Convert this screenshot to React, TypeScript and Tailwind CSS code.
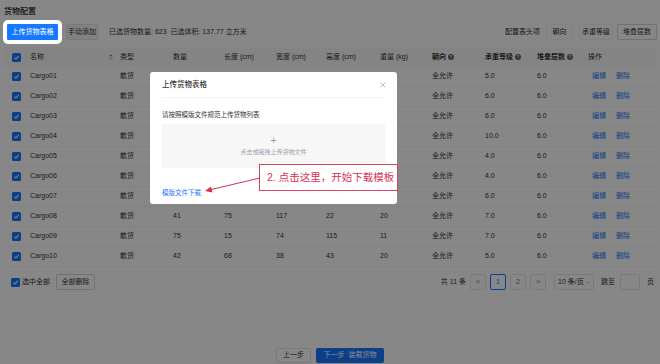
import React from "react";

const ROWS = [
  { name: "Cargo01", bear: "5.0" },
  { name: "Cargo02", bear: "6.0" },
  { name: "Cargo03", bear: "6.0" },
  { name: "Cargo04", bear: "10.0" },
  { name: "Cargo05", bear: "4.0" },
  { name: "Cargo06", bear: "4.0" },
  { name: "Cargo07", bear: "6.0" },
  { name: "Cargo08", qty: 41, l: 75, w: 117, h: 22, kg: 20, bear: "7.0" },
  { name: "Cargo09", qty: 75, l: 15, w: 74, h: 115, kg: 11, bear: "7.0" },
  { name: "Cargo10", qty: 42, l: 68, w: 38, h: 43, kg: 20, bear: "5.0" },
];

const GRID = "grid grid-cols-[22px_90px_53px_51px_52px_50px_54px_52px_53px_52px_51px_72px]";

function Check() {
  return (
    <span className="flex h-[9px] w-[9px] items-center justify-center rounded-[1.5px] bg-[#1677ff]">
      <svg viewBox="0 0 10 10" className="h-[7px] w-[7px]">
        <path d="M2 5.2 4.2 7.3 8.2 2.8" fill="none" stroke="white" strokeWidth="1.5" />
      </svg>
    </span>
  );
}

function Info() {
  return (
    <span className="ml-[2px] inline-flex h-[6px] w-[6px] items-center justify-center rounded-full bg-[#666] text-[4px] leading-none text-white">
      ?
    </span>
  );
}

function PageBox({ children, active }: { children: React.ReactNode; active?: boolean }) {
  return (
    <span
      className={`flex h-[16px] w-[16px] items-center justify-center rounded-[2px] border text-[7px] ${
        active ? "border-[#1677ff] text-[#1677ff]" : "border-gray-200 text-gray-500"
      }`}
    >
      {children}
    </span>
  );
}

export default function App() {
  return (
    <div className="relative h-[364px] w-[660px] overflow-hidden bg-white font-['Liberation_Sans','Noto_Sans_CJK_SC',sans-serif] text-[#333]">
      <div className="flex h-full flex-col px-1 pt-[7px]">
        {/* Title */}
        <div className="text-[8px] leading-[10px] font-medium text-[#222]">货物配置</div>

        {/* Toolbar */}
        <div className="mt-[7px] flex h-[16px] items-center text-[7px]">
          <span className="relative z-20 ml-[3px] flex h-[16px] w-[51px] items-center justify-center rounded-[1px] bg-[#1677ff] text-white outline-[4px] outline-white">
            上传货物表格
          </span>
          <span className="ml-[8px] flex h-[16px] w-[32px] items-center justify-center rounded-[2px] border border-gray-200 bg-gray-100">
            手动添加
          </span>
          <span className="ml-[11px]">已选货物数量: 623&nbsp;&nbsp;已选体积: 137.77 立方米</span>
          <span className="ml-auto">配置表头项</span>
          <span className="ml-[6px] flex h-[16px] w-[27px] items-center justify-center rounded-[2px] border border-gray-100">朝向</span>
          <span className="ml-[6px] flex h-[16px] w-[34px] items-center justify-center rounded-[2px] border border-gray-100">承重等级</span>
          <span className="ml-[4px] mr-[-1px] flex h-[16px] w-[40px] items-center justify-center rounded-[2px] border border-gray-300">堆叠层数</span>
        </div>

        {/* Table */}
        <div className="mt-[7px] text-[7px]">
          <div className={`${GRID} h-[20px] items-center bg-[#fafafa] text-[#333]`}>
            <span className="flex justify-end pr-[5px]"><Check /></span>
            <span className="flex items-center pl-1">
              名称
              <svg viewBox="0 0 6 8" className="ml-auto mr-[3px] h-[6px] w-[4px]">
                <path d="M3 0 6 3H0z" fill="#888" />
                <path d="M3 8 0 5H6z" fill="#bbb" />
              </svg>
            </span>
            <span className="pl-1">类型</span>
            <span className="pl-1">数量</span>
            <span className="pl-1">长度 (cm)</span>
            <span className="pl-1">宽度 (cm)</span>
            <span className="pl-1">高度 (cm)</span>
            <span className="pl-1">重量 (kg)</span>
            <span className="flex items-center pl-1 font-bold">朝向<Info /></span>
            <span className="flex items-center pl-1 font-bold">承重等级<Info /></span>
            <span className="flex items-center pl-1 font-bold">堆叠层数<Info /></span>
            <span className="pl-1">操作</span>
          </div>
          {ROWS.map((r) => (
            <div key={r.name} className={`${GRID} h-[20px] items-center border-b border-gray-100`}>
              <span className="flex justify-end pr-[5px]"><Check /></span>
              <span className="pl-1">{r.name}</span>
              <span className="pl-1">散货</span>
              <span className="pl-1">{r.qty}</span>
              <span className="pl-1">{r.l}</span>
              <span className="pl-1">{r.w}</span>
              <span className="pl-1">{r.h}</span>
              <span className="pl-1">{r.kg}</span>
              <span className="pl-1">全允许</span>
              <span className="pl-1">{r.bear}</span>
              <span className="pl-1">6.0</span>
              <span className="flex gap-[10px] pl-2 text-[#1677ff]">
                <span>编辑</span>
                <span>删除</span>
              </span>
            </div>
          ))}
        </div>

        {/* Bottom bar */}
        <div className="mt-[7px] flex h-[16px] items-center text-[7px]">
          <span className="ml-[7px]"><Check /></span>
          <span className="ml-[2px]">选中全部</span>
          <span className="ml-[6px] flex h-[16px] w-[39px] items-center justify-center rounded-[2px] border border-gray-300">全部删除</span>
          <span className="ml-auto">共 11 条</span>
          <span className="ml-[4px] flex items-center gap-[4px]">
            <PageBox>&lt;</PageBox>
            <PageBox active>1</PageBox>
            <PageBox>2</PageBox>
            <PageBox>&gt;</PageBox>
          </span>
          <span className="ml-[8px] flex h-[16px] w-[40px] items-center whitespace-nowrap rounded-[2px] border border-gray-200 pl-[3px]">
            10 条/页
            <svg viewBox="0 0 8 5" className="ml-auto mr-[3px] h-[3px] w-[5px] shrink-0">
              <path d="M1 1 4 4 7 1" fill="none" stroke="#aaa" strokeWidth="1.2" />
            </svg>
          </span>
          <span className="ml-[7px]">跳至</span>
          <span className="ml-[5px] h-[16px] w-[20px] rounded-[2px] border border-gray-200" />
          <span className="ml-[7px] mr-[2px]">页</span>
        </div>

        {/* Footer buttons */}
        <div className="mt-auto mb-[1px] flex justify-center gap-[5px] text-[7px]">
          <span className="flex h-[15px] w-[35px] items-center justify-center rounded-[2px] border border-gray-200 bg-white">上一步</span>
          <span className="flex h-[15px] w-[68px] items-center justify-center rounded-[2px] bg-[#1677ff] text-white">下一步&nbsp;&nbsp;装载货物</span>
        </div>
      </div>

      {/* Mask */}
      <div className="absolute inset-0 z-10 bg-black/47" />

      {/* Modal */}
      <div className="absolute left-[150px] top-[72px] z-20 flex h-[132px] w-[247px] flex-col rounded-[3px] bg-white px-[12px] text-[#333]">
        <div className="flex h-[26px] items-center border-b border-gray-100 pt-[1px]">
          <span className="text-[7.5px] font-medium">上传货物表格</span>
          <svg viewBox="0 0 10 10" className="ml-auto mr-[-1px] h-[6px] w-[6px]">
            <path d="M1 1 9 9M9 1 1 9" stroke="#999" strokeWidth="1.1" />
          </svg>
        </div>
        <div className="mt-[13px] text-[6.5px] leading-[8px]">请按照模版文件规范上传货物列表</div>
        <div className="mt-[5px] flex h-[44px] flex-col items-center justify-center rounded-[2px] border border-dashed border-gray-100 bg-[#f7f7f7]">
          <span className="text-[11px] font-light leading-[11px] text-gray-400">+</span>
          <span className="mt-[2px] text-[6px] text-gray-400">点击或拖拽上传货物文件</span>
        </div>
        <div className="mt-[20px] text-[6.5px] text-[#1677ff]">模版文件下载</div>
      </div>

      {/* Annotation */}
      <div className="absolute left-[259px] top-[164px] z-30 flex h-[27px] w-[139px] items-center border border-[#d9435e] bg-white pl-[7px] text-[10.5px] text-[#d9304f]">
        2. 点击这里，开始下载模板
      </div>
      <svg className="absolute left-[200px] top-[174px] z-30 h-[22px] w-[62px]" viewBox="0 0 62 22">
        <path d="M60 4 9 16" stroke="#d9304f" strokeWidth="1" />
        <path d="M5 17 11 12.5 12.4 18.4z" fill="#d9304f" />
      </svg>
    </div>
  );
}
